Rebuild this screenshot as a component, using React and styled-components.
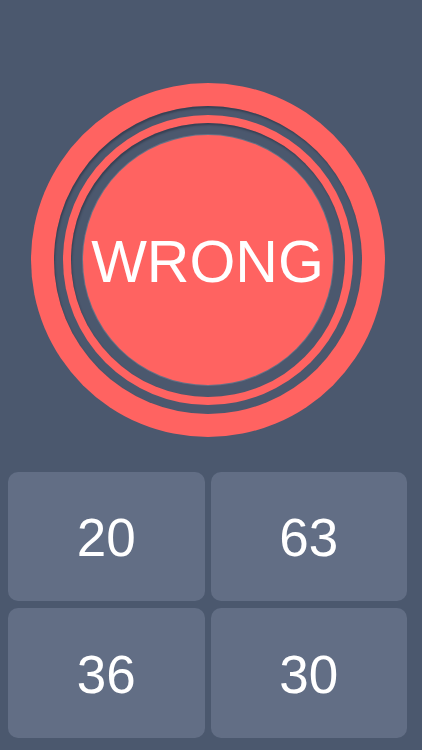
import React from 'react';
import styled, { createGlobalStyle } from 'styled-components';

const RED = '#ff6361';
const SLATE = '#4b586e';

const GlobalStyle = createGlobalStyle`
  html, body {
    margin: 0;
    padding: 0;
    background-color: ${SLATE};
    font-family: 'Liberation Sans', Arial, sans-serif;
  }
`;

const Screen = styled.main`
  height: 750px;
  box-sizing: border-box;
  padding: 0 15px 12px 8px;
  display: flex;
  flex-direction: column;
  background-color: ${SLATE};
`;

const Ring = styled.div`
  box-sizing: border-box;
  border-radius: 50%;
  padding: ${(p) => p.$pad}px;
  background-color: ${(p) => (p.$dark ? SLATE : RED)};
  box-shadow: ${(p) =>
    p.$dark ? 'inset 1px 2px 2px rgba(30, 36, 50, 0.45)' : 'none'};
  display: flex;
`;

const Badge = styled(Ring)`
  width: 354px;
  height: 354px;
  margin: 83px auto 35px;
`;

const Face = styled.div`
  flex: 1;
  border-radius: 50%;
  background-color: ${RED};
  box-shadow: 0 0 0 1px rgba(120, 130, 150, 0.6);
  display: flex;
  align-items: center;
  justify-content: center;
  color: white;
  font-size: 59px;
  padding-top: 4px;
`;

const Answers = styled.section`
  display: grid;
  grid-template-columns: 1fr 1fr;
  grid-template-rows: 129px 130px;
  gap: 7px 6px;
`;

const Answer = styled.button`
  border: none;
  border-radius: 10px;
  background-color: #626e85;
  color: white;
  font-family: 'Liberation Sans', Arial, sans-serif;
  font-size: 53px;
  display: flex;
  align-items: center;
  justify-content: center;
  padding: 2px 0 0;
  cursor: pointer;
`;

const choices = [20, 63, 36, 30];

export default function App() {
  return (
    <>
      <GlobalStyle />
      <Screen>
        <Badge $pad={23}>
          <Ring $dark $pad={9} style={{ flex: 1 }}>
            <Ring $pad={8} style={{ flex: 1 }}>
              <Ring $dark $pad={12} style={{ flex: 1 }}>
                <Face>WRONG</Face>
              </Ring>
            </Ring>
          </Ring>
        </Badge>
        <Answers>
          {choices.map((n) => (
            <Answer key={n}>{n}</Answer>
          ))}
        </Answers>
      </Screen>
    </>
  );
}
